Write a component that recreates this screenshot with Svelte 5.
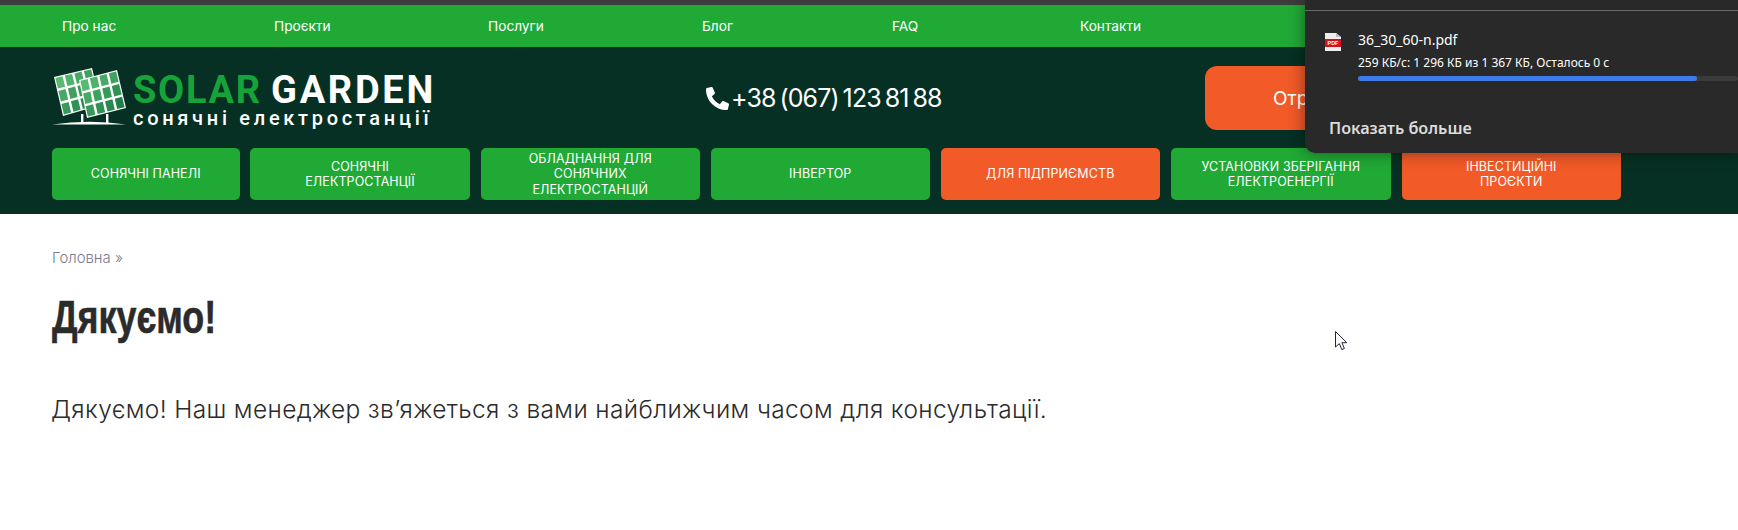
<script>
  const topLinks = ['Про нас', 'Проєкти', 'Послуги', 'Блог', 'FAQ', 'Контакти'];
  const menu = [
    { label: 'СОНЯЧНІ ПАНЕЛІ' },
    { label: 'СОНЯЧНІ\nЕЛЕКТРОСТАНЦІЇ' },
    { label: 'ОБЛАДНАННЯ ДЛЯ\nСОНЯЧНИХ\nЕЛЕКТРОСТАНЦІЙ' },
    { label: 'ІНВЕРТОР' },
    { label: 'ДЛЯ ПІДПРИЄМСТВ', hot: true },
    { label: 'УСТАНОВКИ ЗБЕРІГАННЯ\nЕЛЕКТРОЕНЕРГІЇ' },
    { label: 'ІНВЕСТИЦІЙНІ\nПРОЄКТИ', hot: true }
  ];
  function cells(a, b, c, d, cols, rows) {
    const lerp = (p, q, t) => [p[0] + (q[0] - p[0]) * t, p[1] + (q[1] - p[1]) * t];
    const at = (u, v) => lerp(lerp(a, b, u), lerp(d, c, u), v);
    const out = [];
    const g = 0.03;
    for (let r = 0; r < rows; r++) for (let k = 0; k < cols; k++) {
      const u0 = k / cols + g, u1 = (k + 1) / cols - g, v0 = r / rows + g, v1 = (r + 1) / rows - g;
      const pts = [at(u0, v0), at(u1, v0), at(u1, v1), at(u0, v1)];
      const shade = (k * 0.5 + r) / (cols * 0.5 + rows);
      const light = [86, 186, 112], dark = [28, 122, 70];
      const col = light.map((l, i) => Math.round(l + (dark[i] - l) * shade * 1.3));
      out.push({ points: pts.map((p) => p.map((n) => n.toFixed(1)).join(',')).join(' '), fill: `rgb(${col.join(',')})` });
    }
    return out;
  }
  const backFrame = [[2, 11], [40, 2], [49, 39], [11, 50]];
  const frontFrame = [[27, 14], [65, 4], [74, 42], [35, 52]];
  const back = cells(...backFrame, 4, 3);
  const front = cells(...frontFrame, 4, 3);
  const poly = (f) => f.map((p) => p.join(',')).join(' ');
</script>

<div class="page">
  <div class="strip"></div>
  <nav class="toplinks">
    {#each topLinks as link}<a href="#top">{link}</a>{/each}
  </nav>
  <header class="head">
    <div class="headrow">
      <a class="logo" href="#top">
        <svg class="mark" viewBox="0 0 76 60" width="76" height="60" aria-hidden="true">
          <rect x="29" y="48" width="2.4" height="9" fill="#fff" />
          <rect x="54" y="48" width="2.4" height="9" fill="#fff" />
          <path d="M0 58.5Q38 53 74 58.5Z" fill="#fff" />
          <polygon points={poly(backFrame)} fill="#fff" />
          {#each back as c}<polygon points={c.points} fill={c.fill} />{/each}
          <polygon points={poly(frontFrame)} fill="#fff" />
          {#each front as c}<polygon points={c.points} fill={c.fill} />{/each}
        </svg>
        <span class="wordmark">
          <span class="brand"><b>SOLAR</b> GARDEN</span>
          <span class="tag">сонячні електростанції</span>
        </span>
      </a>
      <a class="phone" href="#top">
        <svg viewBox="0 0 512 512" width="23" height="23" aria-hidden="true">
          <path fill="#fff" transform="translate(512 0) scale(-1 1)" d="M493.4 24.6l-104-24c-11.3-2.6-22.9 3.3-27.5 13.9l-48 112c-4.2 9.8-1.4 21.3 6.9 28l60.6 49.6c-36 76.7-98.9 140.5-177.2 177.2l-49.6-60.6c-6.8-8.3-18.2-11.1-28-6.9l-112 48C3.9 366.5-2 378.1.6 389.4l24 104C27.1 504.2 36.7 512 48 512c256.1 0 464-207.5 464-464 0-11.2-7.7-20.9-18.6-23.4z" />
        </svg>
        <span>+38 (067) 123 81 88</span>
      </a>
      <button class="cta">Отримати</button>
    </div>
    <div class="menu">
      {#each menu as item}
        <a class="item" class:hot={item.hot} href="#top">{item.label}</a>
      {/each}
    </div>
  </header>
  <main class="content">
    <div class="crumb">Головна »</div>
    <h1>Дякуємо!</h1>
    <p>Дякуємо! Наш менеджер зв’яжеться з вами найближчим часом для консультації.</p>
  </main>

  <aside class="downloads">
    <div class="rule"></div>
    <div class="file">
      <svg viewBox="0 0 16 18" width="16" height="18" aria-hidden="true">
        <path d="M0 0H11L16 4V18H0Z" fill="#eeeeee" />
        <path d="M11 0L16 4H11Z" fill="#bdbdbd" />
        <rect x="0" y="6" width="16" height="8" fill="#d50f1f" />
        <text x="8" y="12.2" text-anchor="middle" font-size="5.4" font-weight="700" font-family="Liberation Sans, sans-serif" fill="#fff">PDF</text>
      </svg>
      <div class="meta">
        <div class="name">36_30_60-n.pdf</div>
        <div class="status">259 КБ/с: 1 296 КБ из 1 367 КБ, Осталось 0 с</div>
        <div class="track"><div class="fill"></div></div>
      </div>
    </div>
    <div class="more">Показать больше</div>
  </aside>

  <svg class="cursor" viewBox="0 0 13 20" width="13" height="20" aria-hidden="true">
    <path d="M.5.5V16L4.3 12.6 6.8 18.6 9.4 17.5 6.9 11.7H11.8Z" fill="#fff" stroke="#222433" stroke-width="1" />
  </svg>
</div>

<style>
  :global(body) { margin: 0; background: #fff; }
  .page { position: relative; width: 1738px; height: 530px; overflow: hidden; font-family: Inter, "Liberation Sans", sans-serif; }
  a { color: inherit; text-decoration: none; }
  .strip { height: 5px; background: #3c3c3c; }
  .toplinks { height: 42px; background: #21a936; display: grid; grid-template-columns: 212px 214px 214px 190px 188px auto; justify-content: start; align-items: center; padding-left: 62px; color: #fff; font-size: 13.7px; }
  .head { background: #063023; padding: 19px 0 14px 52px; height: 167px; box-sizing: border-box; }
  .headrow { display: grid; grid-template-columns: 654px 499px 420px; height: 64px; }
  .logo { display: flex; gap: 5px; color: #fff; }
  .mark { flex: none; }
  .wordmark { display: flex; flex-direction: column; font-family: Roboto, sans-serif; padding-top: 6px; }
  .brand { font-size: 38px; line-height: 37px; font-weight: 700; letter-spacing: 2.7px; word-spacing: -3px; white-space: nowrap; }
  .brand b { color: #18a23a; font-weight: 700; letter-spacing: 1.7px; }
  .tag { font-size: 20px; line-height: 18px; font-weight: 500; letter-spacing: 3.7px; white-space: nowrap; }
  .phone { display: flex; align-items: center; gap: 2px; color: #fff; font-size: 25px; letter-spacing: -0.85px; word-spacing: -2.4px; white-space: nowrap; height: 64px; }
  .cta { background: #f25a28; color: #fff; border: 0; border-radius: 12px; font: 400 19px Inter, sans-serif; text-align: left; padding-left: 68px; height: 64px; }
  .menu { display: grid; grid-template-columns: 187.5px 220px 219.5px 219.5px 219.5px 220.5px 219.5px; gap: 10.5px; margin-top: 18px; height: 52px; }
  .item { background: #21a936; border-radius: 5px; color: #fff; display: flex; align-items: center; justify-content: center; text-align: center; white-space: pre-line; font-size: 12.5px; letter-spacing: 0.1px; line-height: 15.5px; }
  .item.hot { background: #f25a28; }
  .content { padding: 33px 0 0 52px; color: #2b2b2b; }
  .crumb { font-size: 14.9px; line-height: 22px; color: #787a90; font-weight: 300; }
  h1 { margin: 20px 0 0; font-family: "Liberation Sans", sans-serif; font-size: 46px; line-height: 56px; font-weight: 700; transform: scaleX(.78); transform-origin: left; -webkit-text-stroke: .6px #2b2b2b; }
  p { margin: 47px 0 0 -1px; font-size: 24.5px; line-height: 34px; letter-spacing: .36px; font-weight: 340; white-space: nowrap; }
  .downloads { position: absolute; top: 0; right: 0; width: 433px; height: 153px; background: #292929; border-bottom-left-radius: 10px; box-shadow: 0 0 16px rgba(0, 0, 0, .45); font-family: "Noto Sans", sans-serif; color: #fff; }
  .rule { margin-top: 10px; height: 1px; background: #6a6a6a; }
  .file { display: flex; gap: 17px; padding: 19px 0 0 20px; margin-top: 3px; }
  .file svg { flex: none; }
  .meta { flex: 1; margin-top: -3px; }
  .name { font-size: 14px; line-height: 20px; }
  .status { font-size: 12px; line-height: 16px; margin-top: 5px; }
  .track { height: 5px; background: #3b3b3b; margin-top: 5px; border-radius: 3px; }
  .fill { width: 339px; height: 5px; background: #3d7ce8; border-radius: 3px; }
  .more { margin: 37px 0 0 24px; font-size: 16.2px; font-weight: 600; line-height: 20px; color: #dcdcdc; }
  .cursor { position: absolute; left: 1335px; top: 331px; }
</style>
